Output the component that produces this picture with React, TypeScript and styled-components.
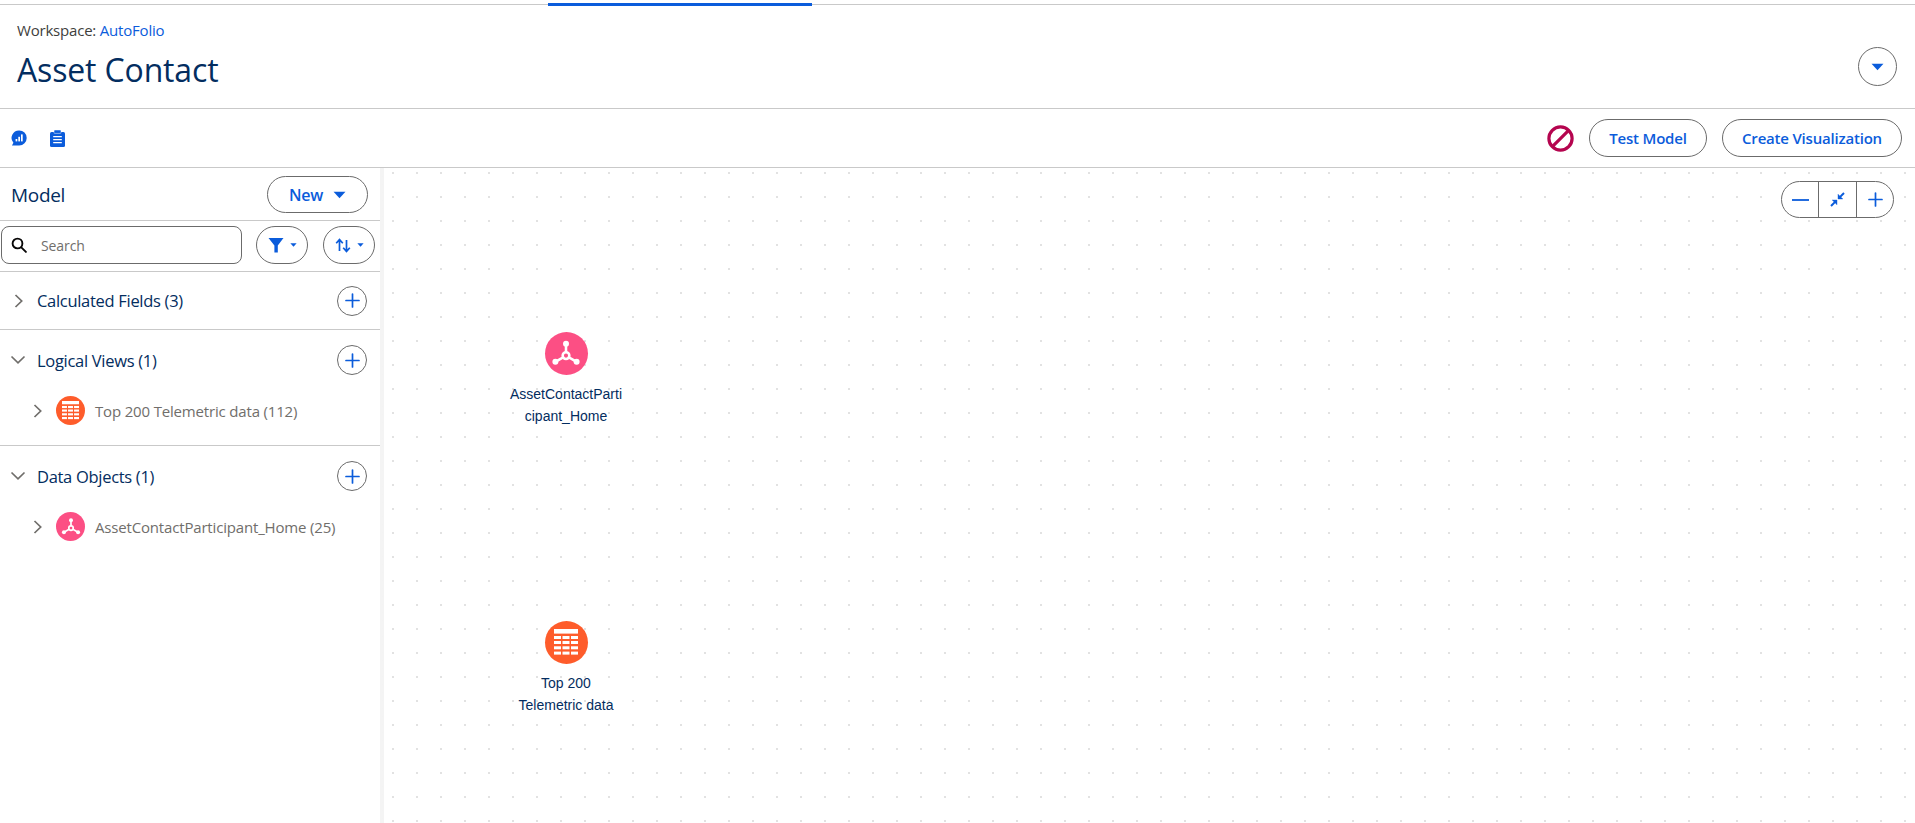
import React from "react"
import styled, { createGlobalStyle } from "styled-components"

const BLUE = "#0b5cdb"
const NAVY = "#032d60"
const LINE = "#c9c9c9"
const OUTLINE = "#6b6b6b"

const GlobalStyle = createGlobalStyle`
  html, body { margin: 0; padding: 0; background: #fff; overflow: hidden; }
  body { font-family: "Open Sans", "Noto Sans", sans-serif; color: ${NAVY}; }
`

const Page = styled.div`
  width: 1915px;
  height: 823px;
  display: flex;
  flex-direction: column;
  overflow: hidden;
`

const TopStrip = styled.div`
  height: 6px;
  flex: none;
  padding-left: 548px;
  box-sizing: border-box;
  border-top: 1px solid transparent;
  background: linear-gradient(${LINE}, ${LINE}) 0 3px / 100% 1px no-repeat;
`

const ActiveTab = styled.div`
  width: 264px;
  height: 3px;
  margin-top: 2px;
  background: ${BLUE};
`

const Header = styled.header`
  height: 103px;
  flex: none;
  box-sizing: border-box;
  border-bottom: 1px solid ${LINE};
  display: flex;
  justify-content: space-between;
  align-items: center;
  padding: 0 18px 0 17px;
`

const TitleBlock = styled.div`
  display: flex;
  flex-direction: column;
  margin-top: -2px;
`

const Crumb = styled.div`
  font-size: 15px;
  line-height: 20px;
  color: #3e3e3c;
  letter-spacing: -0.2px;
`

const CrumbLink = styled.span`
  color: ${BLUE};
`

const Title = styled.h1`
  margin: 8px 0 0;
  font-size: 32px;
  line-height: 44px;
  font-weight: 400;
  color: ${NAVY};
  letter-spacing: -0.15px;
`

const RoundButton = styled.button`
  width: 39px;
  height: 39px;
  padding: 0;
  border: 1px solid ${OUTLINE};
  border-radius: 50%;
  background: #fff;
  display: flex;
  align-items: center;
  justify-content: center;
  margin-top: 19px;
`

const Toolbar = styled.div`
  height: 59px;
  flex: none;
  box-sizing: border-box;
  border-bottom: 1px solid ${LINE};
  display: flex;
  align-items: center;
  justify-content: space-between;
  padding: 0 13px 0 11px;
`

const ToolIcons = styled.div`
  display: flex;
  align-items: center;
  gap: 23px;
`

const ToolActions = styled.div`
  display: flex;
  align-items: center;
`

const PillButton = styled.button<{ $w: number }>`
  height: 38px;
  box-sizing: border-box;
  border: 1px solid ${OUTLINE};
  border-radius: 19px;
  background: #fff;
  color: ${BLUE};
  font-family: inherit;
  font-size: 15px;
  font-weight: 600;
  letter-spacing: -0.2px;
  padding: 0;
  width: ${(p) => p.$w}px;
  margin-left: 15px;
`

const Body = styled.div`
  flex: 1;
  display: flex;
  min-height: 0;
`

const Sidebar = styled.aside`
  width: 384px;
  flex: none;
  box-sizing: border-box;
  border-right: 4px solid;
  border-image: linear-gradient(to right, #d8d8d8, #f4f4f4) 1;
  display: flex;
  flex-direction: column;
`

const ModelRow = styled.div`
  height: 53px;
  box-sizing: border-box;
  border-bottom: 1px solid ${LINE};
  display: flex;
  align-items: center;
  justify-content: space-between;
  padding: 0 12px 0 11px;
`

const ModelLabel = styled.span`
  padding-top: 2px;
  font-size: 19px;
  color: ${NAVY};
  letter-spacing: -0.3px;
`

const NewButton = styled.button`
  width: 101px;
  height: 37px;
  box-sizing: border-box;
  border: 1px solid ${OUTLINE};
  border-radius: 19px;
  background: #fff;
  color: ${BLUE};
  font-family: inherit;
  font-size: 16px;
  font-weight: 600;
  letter-spacing: -0.3px;
  display: flex;
  align-items: center;
  justify-content: center;
  gap: 10px;
  padding: 1px 0 0;
`

const SearchRow = styled.div`
  height: 51px;
  box-sizing: border-box;
  border-bottom: 1px solid ${LINE};
  display: flex;
  align-items: flex-start;
  gap: 14px;
  padding: 5px 0 0 1px;
`

const SearchBox = styled.div`
  width: 241px;
  height: 38px;
  flex: none;
  box-sizing: border-box;
  border: 1px solid ${OUTLINE};
  border-radius: 8px;
  display: flex;
  align-items: center;
  padding-left: 9px;
  gap: 14px;
`

const SearchText = styled.span`
  font-size: 14px;
  color: #706e6b;
  letter-spacing: -0.1px;
`

const MiniMenu = styled.button`
  width: 52px;
  height: 38px;
  flex: none;
  box-sizing: border-box;
  border: 1px solid ${OUTLINE};
  border-radius: 19px;
  background: #fff;
  padding: 0;
  display: flex;
  align-items: center;
  justify-content: center;
  gap: 6px;
  & + & {
    margin-left: 1px;
  }
`

const Section = styled.section<{ $last?: boolean; $pad: number }>`
  border-bottom: ${(p) => (p.$last ? "none" : `1px solid ${LINE}`)};
  padding-bottom: ${(p) => p.$pad}px;
`

const SectionHead = styled.div<{ $open: boolean }>`
  height: ${(p) => (p.$open ? 60 : 57)}px;
  display: flex;
  align-items: center;
  padding: 0 13px 0 10px;
`

const Chevron = styled.span<{ $open: boolean }>`
  width: 27px;
  display: flex;
  align-items: center;
  padding-left: ${(p) => (p.$open ? 0 : 3)}px;
  box-sizing: border-box;
`

const SectionTitle = styled.span`
  flex: 1;
  font-size: 16.5px;
  color: ${NAVY};
  letter-spacing: -0.3px;
`

const PlusCircle = styled.button`
  width: 30px;
  height: 30px;
  padding: 0;
  border: 1px solid ${OUTLINE};
  border-radius: 50%;
  background: #fff;
  display: flex;
  align-items: center;
  justify-content: center;
`

const ItemRow = styled.div`
  height: 29px;
  margin-top: 6px;
  display: flex;
  align-items: center;
  padding-left: 32px;
`

const ItemChevron = styled.span`
  width: 24px;
  display: flex;
  align-items: center;
`

const Badge = styled.span<{ $bg: string }>`
  width: 29px;
  height: 29px;
  border-radius: 50%;
  background: ${(p) => p.$bg};
  display: flex;
  align-items: center;
  justify-content: center;
  flex: none;
`

const ItemText = styled.span`
  margin-left: 10px;
  font-size: 15px;
  color: #706e6b;
  letter-spacing: -0.17px;
`

const Canvas = styled.main`
  flex: 1;
  position: relative;
  background-color: #fff;
  background-image: radial-gradient(circle at center, #e2e2e2 0, #e2e2e2 1px, transparent 1.2px);
  background-size: 24px 24px;
  background-position: -3px -7px;
`

const ZoomGroup = styled.div`
  position: absolute;
  top: 13px;
  right: 21px;
  width: 113px;
  height: 37px;
  box-sizing: border-box;
  border: 1px solid ${OUTLINE};
  border-radius: 19px;
  background: #fff;
  display: grid;
  grid-template-columns: 37px 38px 1fr;
`

const ZoomCell = styled.div<{ $divider?: boolean }>`
  display: flex;
  align-items: center;
  justify-content: center;
  border-right: ${(p) => (p.$divider ? `1px solid ${OUTLINE}` : "none")};
`

const Node = styled.div<{ $left: number; $top: number }>`
  position: absolute;
  left: ${(p) => p.$left}px;
  top: ${(p) => p.$top}px;
  width: 120px;
  display: flex;
  flex-direction: column;
  align-items: center;
`

const NodeBadge = styled(Badge)`
  width: 43px;
  height: 43px;
  margin-bottom: 8px;
`

const NodeLabel = styled.div`
  width: 117px;
  font-family: "Liberation Sans", Arial, sans-serif;
  font-size: 14px;
  line-height: 22px;
  text-align: center;
  color: ${NAVY};
  overflow-wrap: anywhere;
`

const Caret = ({ w = 13, h = 8 }: { w?: number; h?: number }) => (
  <svg width={w} height={h} viewBox="0 0 12 7">
    <path d="M0.5 0.5H11.5L6 6.5Z" fill={BLUE} />
  </svg>
)

const ChevronRight = () => (
  <svg width="12" height="16" viewBox="0 0 12 16" fill="none" stroke="#706e6b" strokeWidth="1.7">
    <path d="M2.5 2l6.2 6-6.2 6" />
  </svg>
)

const ChevronDown = () => (
  <svg width="16" height="12" viewBox="0 0 16 12" fill="none" stroke="#706e6b" strokeWidth="1.7">
    <path d="M1.5 2.5l6.5 6.3 6.5-6.3" />
  </svg>
)

const PlusIcon = ({ size = 15 }: { size?: number }) => (
  <svg width={size} height={size} viewBox="0 0 15 15" stroke={BLUE} strokeWidth="1.7" strokeLinecap="round">
    <path d="M7.5 1v13M1 7.5h13" />
  </svg>
)

const HubIcon = ({ size }: { size: number }) => (
  <svg width={size} height={size} viewBox="0 0 26 26" fill="none" stroke="#fff">
    <circle cx="13" cy="14.4" r="2.9" strokeWidth="2.2" />
    <path d="M13 11.5V5M10.5 16l-6 3.4M15.5 16l6 3.4" strokeWidth="2.2" />
    <circle cx="13" cy="4.2" r="2.6" fill="#fff" stroke="none" />
    <circle cx="3.8" cy="19.8" r="2.6" fill="#fff" stroke="none" />
    <circle cx="22.2" cy="19.8" r="2.6" fill="#fff" stroke="none" />
  </svg>
)

const TableIcon = ({ size }: { size: number }) => (
  <svg width={size} height={(size * 27) / 24} viewBox="0 0 24 27" fill="#fff">
    <rect x="0" y="0" width="24" height="4.6" />
    {[7, 12, 17.3, 22.6].map((y) =>
      [0, 8.5, 17].map((x) => <rect key={`${x}-${y}`} x={x} y={y} width="7" height="3" />)
    )}
  </svg>
)

const ChatChartIcon = () => (
  <svg width="16" height="16" viewBox="0 0 16 16">
    <path d="M8.2 0.4a7.5 7.5 0 0 1 0 15H1l1.4-2.6A7.5 7.5 0 0 1 8.2 0.4Z" fill={BLUE} />
    <rect x="4.6" y="9" width="1.7" height="2.4" fill="#fff" />
    <rect x="7.3" y="6.8" width="1.7" height="4.6" fill="#fff" />
    <rect x="10" y="4.4" width="1.7" height="7" fill="#fff" />
  </svg>
)

const ClipboardIcon = () => (
  <svg width="15" height="17" viewBox="0 0 15 17">
    <rect x="0" y="2" width="15" height="15" rx="1.5" fill={BLUE} />
    <rect x="4" y="0" width="7" height="3.4" rx="0.8" fill={BLUE} stroke="#fff" strokeWidth="0.5" />
    <path d="M3.2 6.6h8.6M3.2 9.6h8.6M3.2 12.6h8.6" stroke="#fff" strokeWidth="1.2" />
  </svg>
)

const BlockedIcon = () => (
  <svg width="27" height="27" viewBox="0 0 27 27" fill="none" stroke="#b5054f" strokeWidth="3.2">
    <circle cx="13.5" cy="13.5" r="11.6" />
    <path d="M5.6 21.4L21.4 5.6" />
  </svg>
)

const SearchGlyph = () => (
  <svg width="16" height="16" viewBox="0 0 16 16" fill="none" stroke="#080707" strokeWidth="1.9" strokeLinecap="round">
    <circle cx="6.5" cy="6.5" r="4.9" />
    <path d="M10.3 10.3l4.6 4.6" />
  </svg>
)

const FilterGlyph = () => (
  <svg width="16" height="16" viewBox="0 0 16 16" fill={BLUE}>
    <path d="M0.5 1h15L9.8 8.4V15.5H6.4V8.4Z" />
  </svg>
)

const SortGlyph = () => (
  <svg width="16" height="15" viewBox="0 0 16 15" fill="none" stroke={BLUE} strokeWidth="1.7">
    <path d="M4.5 13V2M1.2 5.2l3.3-3.6 3.3 3.6" />
    <path d="M11.5 2v11M8.2 9.8l3.3 3.6 3.3-3.6" />
  </svg>
)

const CollapseGlyph = () => (
  <svg width="15" height="15" viewBox="0 0 15 15" fill={BLUE} stroke={BLUE}>
    <path d="M14 1L9.6 5.4" strokeWidth="2" />
    <path d="M8 2.2v4.8h4.8Z" strokeWidth="0.4" />
    <path d="M1 14l4.4-4.4" strokeWidth="2" />
    <path d="M7 12.8V8H2.2Z" strokeWidth="0.4" />
  </svg>
)

const sections = [
  { title: "Calculated Fields (3)", open: false, pad: 0 },
  { title: "Logical Views (1)", open: true, pad: 20, item: "Top 200 Telemetric data (112)", kind: "table" },
  { title: "Data Objects (1)", open: true, pad: 20, item: "AssetContactParticipant_Home (25)", kind: "hub", last: true },
]

export default function App() {
  return (
    <Page>
      <GlobalStyle />
      <TopStrip>
        <ActiveTab />
      </TopStrip>
      <Header>
        <TitleBlock>
          <Crumb>
            Workspace: <CrumbLink>AutoFolio</CrumbLink>
          </Crumb>
          <Title>Asset Contact</Title>
        </TitleBlock>
        <RoundButton>
          <Caret />
        </RoundButton>
      </Header>
      <Toolbar>
        <ToolIcons>
          <ChatChartIcon />
          <ClipboardIcon />
        </ToolIcons>
        <ToolActions>
          <BlockedIcon />
          <PillButton $w={118}>Test Model</PillButton>
          <PillButton $w={180}>Create Visualization</PillButton>
        </ToolActions>
      </Toolbar>
      <Body>
        <Sidebar>
          <ModelRow>
            <ModelLabel>Model</ModelLabel>
            <NewButton>
              New <Caret />
            </NewButton>
          </ModelRow>
          <SearchRow>
            <SearchBox>
              <SearchGlyph />
              <SearchText>Search</SearchText>
            </SearchBox>
            <MiniMenu>
              <FilterGlyph />
              <Caret w={7} h={4} />
            </MiniMenu>
            <MiniMenu>
              <SortGlyph />
              <Caret w={7} h={4} />
            </MiniMenu>
          </SearchRow>
          {sections.map((s) => (
            <Section key={s.title} $pad={s.pad} $last={s.last}>
              <SectionHead $open={s.open}>
                <Chevron $open={s.open}>{s.open ? <ChevronDown /> : <ChevronRight />}</Chevron>
                <SectionTitle>{s.title}</SectionTitle>
                <PlusCircle>
                  <PlusIcon />
                </PlusCircle>
              </SectionHead>
              {s.item && (
                <ItemRow>
                  <ItemChevron>
                    <ChevronRight />
                  </ItemChevron>
                  <Badge $bg={s.kind === "table" ? "#fe5c2b" : "#fc4f84"}>
                    {s.kind === "table" ? <TableIcon size={17} /> : <HubIcon size={20} />}
                  </Badge>
                  <ItemText>{s.item}</ItemText>
                </ItemRow>
              )}
            </Section>
          ))}
        </Sidebar>
        <Canvas>
          <ZoomGroup>
            <ZoomCell $divider>
              <svg width="17" height="2" viewBox="0 0 17 2">
                <path d="M0 1h17" stroke={BLUE} strokeWidth="1.8" />
              </svg>
            </ZoomCell>
            <ZoomCell $divider>
              <CollapseGlyph />
            </ZoomCell>
            <ZoomCell>
              <PlusIcon />
            </ZoomCell>
          </ZoomGroup>
          <Node $left={122} $top={164}>
            <NodeBadge $bg="#fc4f84">
              <HubIcon size={30} />
            </NodeBadge>
            <NodeLabel>AssetContactParticipant_Home</NodeLabel>
          </Node>
          <Node $left={122} $top={453}>
            <NodeBadge $bg="#fe5c2b">
              <TableIcon size={24} />
            </NodeBadge>
            <NodeLabel>Top 200 Telemetric data</NodeLabel>
          </Node>
        </Canvas>
      </Body>
    </Page>
  )
}
